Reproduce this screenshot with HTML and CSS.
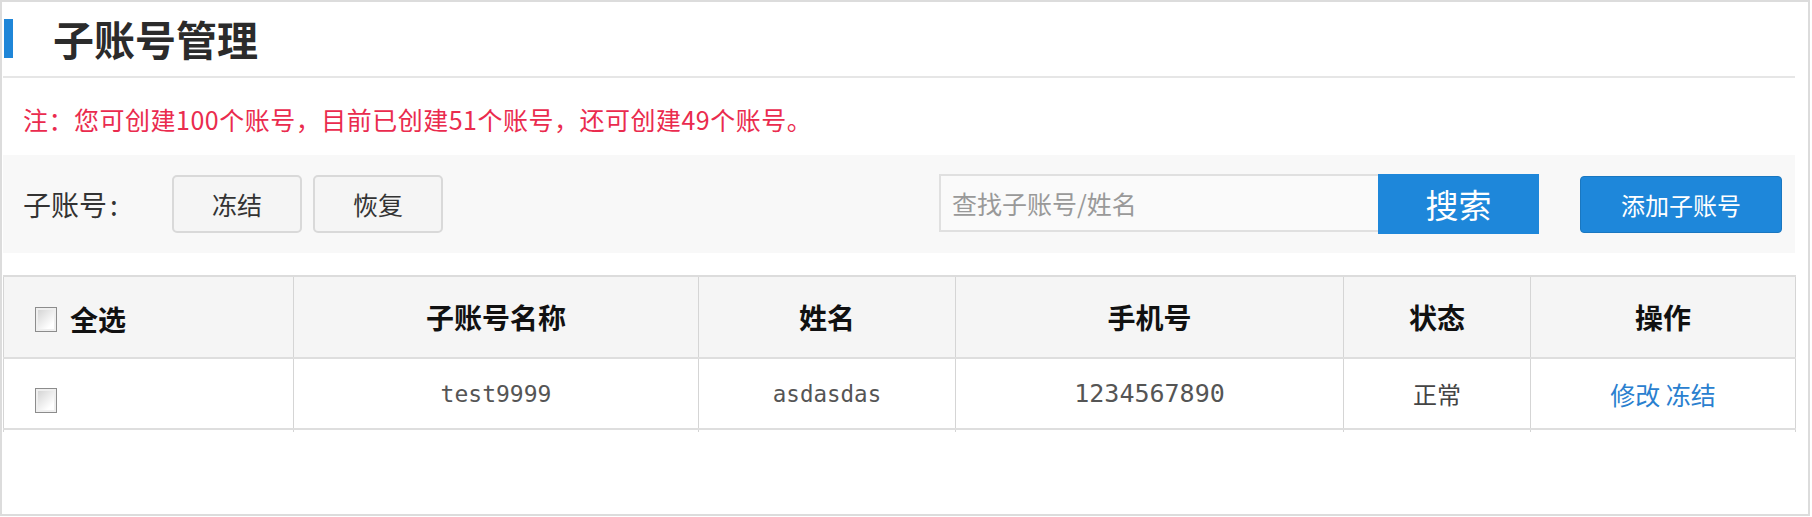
FILE: index.html
```html
<!DOCTYPE html>
<html lang="zh-CN">
<head>
<meta charset="utf-8">
<title>子账号管理</title>
<link rel="stylesheet" href="styles.css">
</head>
<body>
<div class="page">
  <div class="head">
    <span class="bar"></span>
    <h1 class="title">子账号管理</h1>
  </div>
  <p class="note">注：您可创建100个账号，目前已创建51个账号，还可创建49个账号。</p>
  <div class="toolbar">
    <span class="label">子账号<span class="colon">:</span></span>
    <button class="btn">冻结</button>
    <button class="btn">恢复</button>
    <div class="spacer"></div>
    <div class="search">
      <input class="search-input" type="text" placeholder="查找子账号/姓名">
      <button class="search-btn">搜索</button>
    </div>
    <button class="add-btn">添加子账号</button>
  </div>
  <table class="grid">
    <colgroup>
      <col class="c1"><col class="c2"><col class="c3"><col class="c4"><col class="c5"><col class="c6">
    </colgroup>
    <thead>
      <tr>
        <th class="first"><span class="cb"></span><span class="all">全选</span></th>
        <th>子账号名称</th>
        <th>姓名</th>
        <th>手机号</th>
        <th>状态</th>
        <th>操作</th>
      </tr>
    </thead>
    <tbody>
      <tr class="row">
        <td class="first"><span class="cb cb-row"></span></td>
        <td class="mono">test9999</td>
        <td class="mono mono-s">asdasdas</td>
        <td class="mono mono-l">1234567890</td>
        <td class="status">正常</td>
        <td class="ops"><a class="op">修改</a> <a class="op">冻结</a></td>
      </tr>
      <tr class="tail">
        <td></td><td></td><td></td><td></td><td></td><td></td>
      </tr>
    </tbody>
  </table>
</div>
</body>
</html>
```

FILE: styles.css
```css
* { box-sizing: border-box; }
html, body { margin: 0; padding: 0; background: #fff; }
body { font-family: "Noto Sans CJK SC", "Noto Sans", sans-serif; color: #333; }

.page {
  width: 1810px;
  height: 516px;
  border: 2px solid #dcdcdc;
  padding: 0 13px 0 1px;
}

.head {
  display: flex;
  align-items: center;
  padding: 17px 0 18px;
  border-bottom: 2px solid #e6e6e6;
}
.bar {
  display: block;
  width: 9px;
  height: 39px;
  margin-left: 1px;
  background: #1f86d8;
}
.title {
  margin: 0 0 0 40px;
  font-size: 41px;
  line-height: 39px;
  font-weight: 700;
  color: #2b2b2b;
}

.note {
  margin: 26px 0 21px;
  padding-left: 20px;
  font-size: 25px;
  line-height: 30px;
  letter-spacing: 0.5px;
  color: #ea2b4e;
}

.toolbar {
  display: flex;
  align-items: center;
  height: 98px;
  padding: 0 13px 0 20px;
  background: #f8f8f8;
}
.label {
  width: 149px;
  font-size: 28px;
  color: #333;
}
.colon { margin-left: 3px; }
.btn {
  width: 130px;
  height: 58px;
  margin-right: 11px;
  border: 2px solid #d9d9d9;
  border-radius: 5px;
  background: #f5f5f5;
  font-family: inherit;
  font-size: 25px;
  color: #333;
  padding: 0;
}
.spacer { flex: 1; }
.search {
  display: flex;
  align-items: flex-start;
  height: 60px;
}
.search-input {
  width: 439px;
  height: 58px;
  border: 2px solid #e0e0e0;
  border-right: 0;
  background: #fafafa;
  padding: 0 0 0 11px;
  font-family: inherit;
  font-size: 25px;
  color: #333;
  outline: none;
}
.search-input::placeholder { color: #999; }
.search-btn {
  width: 161px;
  height: 60px;
  border: 0;
  background: #1e87da;
  color: #fff;
  font-family: inherit;
  font-size: 33px;
  padding: 0;
}
.add-btn {
  width: 202px;
  height: 57px;
  margin-left: 41px;
  border: 1px solid #1a77c0;
  border-radius: 4px;
  background: #1e87da;
  color: #fff;
  font-family: inherit;
  font-size: 24px;
  padding: 0;
}

.grid {
  width: 1792px;
  margin-top: 22px;
  border-collapse: collapse;
  table-layout: fixed;
}
.c1 { width: 290px; }
.c2 { width: 405px; }
.c3 { width: 257px; }
.c4 { width: 388px; }
.c5 { width: 187px; }
.c6 { width: 265px; }

.grid th, .grid td {
  border: 1px solid #d5d5d5;
  text-align: center;
  padding: 0;
}
.grid thead th {
  height: 82px;
  background: #f5f5f5;
  border-top: 2px solid #dcdcdc;
  border-bottom: 2px solid #dedede;
  font-size: 28px;
  font-weight: 700;
  color: #111;
}
.grid th.first, .grid td.first {
  text-align: left;
  padding-left: 31px;
}
th.first { white-space: nowrap; }
.cb {
  display: inline-block;
  width: 22px;
  height: 25px;
  vertical-align: middle;
  border: 1px solid #8c8c8c;
  box-shadow: inset 0 0 0 2px #efefef;
  background: linear-gradient(135deg, #cfcfcf, #ffffff 75%);
}
.all { vertical-align: middle; margin-left: 13px; }
.cb-row { margin-top: 12px; }

.grid .row td {
  height: 71px;
  border-bottom: 2px solid #dedede;
  font-size: 24px;
  color: #555;
}
.grid .row td.mono {
  font-family: "DejaVu Sans Mono", monospace;
  font-size: 23px;
  color: #555;
}
.grid .row td.mono-s { font-size: 22.5px; }
.grid .row td.mono-l { font-size: 25px; }
.grid .row td.status { color: #444; }
.grid .row td.ops { font-size: 25px; }
.op { color: #2a80cf; text-decoration: none; }
.grid .tail td {
  height: 3px;
  border-top: 0;
  border-bottom: 0;
}
```
